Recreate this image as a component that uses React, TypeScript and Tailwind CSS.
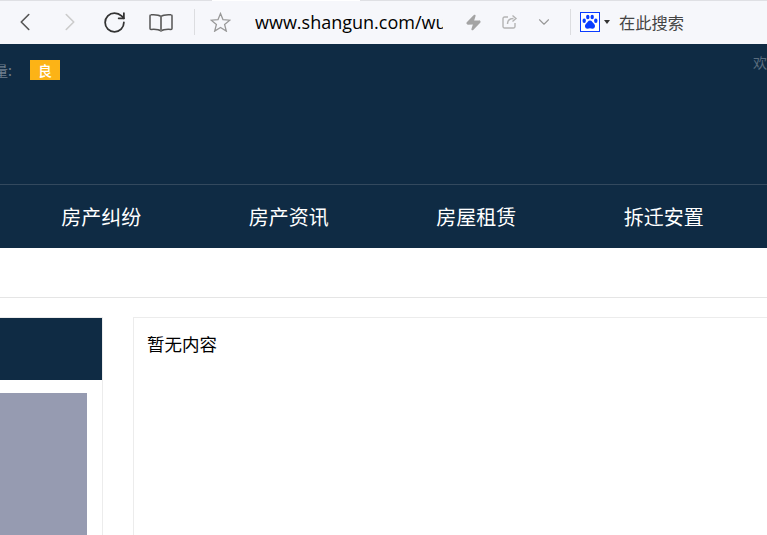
import { ChevronDown, ChevronLeft, ChevronRight, RotateCw, Zap } from "lucide-react";

const navItems = ["房产纠纷", "房产资讯", "房屋租赁", "拆迁安置"];
const cjk = "font-['Noto_Sans_CJK_SC',sans-serif]";

function BookIcon() {
  return (
    <svg width="24" height="20" viewBox="0 0 24 20" fill="none" stroke="#555" strokeWidth="1.5">
      <path d="M12 3.500C10 1.800 6 1.500 2 1.800c-.6 0-1 .4-1 1v12.600c0 .6.4 1 1 1 4-.3 8 0 10 1.600 2-1.600 6-1.900 10-1.600.6 0 1-.4 1-1V2.800c0-.6-.4-1-1-1-4-.3-8 0-10 1.700z" />
      <path d="M12 3.500V18" strokeWidth="2" stroke="#777" />
    </svg>
  );
}

function StarIcon() {
  return (
    <svg width="21" height="20" viewBox="0 0 21 20" fill="none" stroke="#999" strokeWidth="1.300">
      <path d="M10.500 1.500 13 7.700l6.800.5-5.200 4.300 1.700 6.600-5.800-3.600-5.800 3.600 1.700-6.600L1.200 8.200 8 7.700z" />
    </svg>
  );
}

function ShareIcon() {
  return (
    <svg width="16" height="16" viewBox="0 0 16 16" fill="none" stroke="#b4b4b4" strokeWidth="1.4">
      <path d="M6 3H2.500A1.500 1.500 0 0 0 1 4.500v8A1.500 1.500 0 0 0 2.500 14h9a1.500 1.500 0 0 0 1.500-1.500V9" />
      <path d="M5.500 10c0-3.500 2.500-5.500 6-5.500M10.500 1.500 14 4.500l-3.500 3" />
    </svg>
  );
}

function PawLogo() {
  return (
    <div className="flex h-[20px] w-[20px] items-center justify-center border-[1.500px] border-[#0a3cff] bg-white">
      <svg width="16" height="16" viewBox="0 0 16 16" fill="#0a3cff">
        <ellipse cx="2.200" cy="6.800" rx="1.700" ry="2.200" />
        <ellipse cx="5.800" cy="3" rx="1.700" ry="2.200" />
        <ellipse cx="10.200" cy="3" rx="1.700" ry="2.200" />
        <ellipse cx="13.800" cy="6.800" rx="1.700" ry="2.200" />
        <path d="M8 6.500c-2 0-2.500 2-4 3.200-1.800 1.500-1.200 5 1.500 5 1 0 1.700-.4 2.500-.4s1.500.4 2.500.4c2.700 0 3.300-3.500 1.500-5C10.500 8.500 10 6.500 8 6.500z" />
      </svg>
    </div>
  );
}

function Toolbar() {
  return (
    <div className="relative flex h-[44px] items-center bg-[#f6f7fb]">
      <div className="absolute left-0 right-0 top-0 flex h-px">
        <div className="w-[212px] bg-[#dfe0e4]" />
        <div className="w-[148px] bg-white" />
        <div className="flex-1 bg-[#dfe0e4]" />
      </div>
      <ChevronLeft size={30} strokeWidth={1.300} color="#555" className="ml-[10px]" />
      <ChevronRight size={30} strokeWidth={1.300} color="#ccc" className="ml-[15px]" />
      <RotateCw size={25} strokeWidth={1.700} color="#333" className="ml-[17px]" />
      <div className="ml-[22px] mt-[1px]">
        <BookIcon />
      </div>
      <div className="ml-[21px] h-[26px] w-px bg-[#dcdde0]" />
      <div className="ml-[15px]">
        <StarIcon />
      </div>
      <div className="ml-[24px] mt-[1px] w-[188px] overflow-hidden whitespace-nowrap font-['Open_Sans',sans-serif] text-[18px] text-black">
        www.shangun.com/wu
      </div>
      <Zap size={17} fill="#a4a4a4" color="#a4a4a4" className="ml-[22px]" />
      <div className="ml-[20px]">
        <ShareIcon />
      </div>
      <ChevronDown size={18} strokeWidth={1.500} color="#999" className="ml-[17px]" />
      <div className="ml-[17px] h-[26px] w-px bg-[#dcdde0]" />
      <div className="ml-[9px]">
        <PawLogo />
      </div>
      <div className="ml-[4px] h-0 w-0 border-x-[3.500px] border-t-[4px] border-x-transparent border-t-[#333]" />
      <span className={`ml-[9px] mt-[1px] text-[16.250px] text-[#444] ${cjk}`}>在此搜索</span>
    </div>
  );
}

function Header() {
  return (
    <header className={`h-[204px] overflow-hidden bg-[#0f2b44] ${cjk}`}>
      <div className="flex h-[140px] items-start justify-between pt-[8px]">
        <div className="mt-[8px] flex items-center">
          <span className="ml-[-6px] w-[36px] text-[14px] leading-[20px] text-[#6f7f8e]">量:</span>
          <span className="flex h-[20px] w-[30px] items-center justify-center bg-[#fcb316] text-[14px] font-medium text-white">
            良
          </span>
        </div>
        <span className="text-[14px] leading-[20px] text-[#5a6d7f]">欢</span>
      </div>
      <nav className="grid h-[64px] grid-cols-[repeat(4,187.500px)] border-t border-[#33495e] pl-[7.500px]">
        {navItems.map((item) => (
          <a key={item} className="flex items-center justify-center text-[20px] text-white">
            {item}
          </a>
        ))}
      </nav>
    </header>
  );
}

export default function App() {
  return (
    <div className="h-[535px] w-[767px] overflow-hidden bg-white">
      <Toolbar />
      <Header />
      <div className="h-[50px] border-b border-[#e5e5e5]" />
      <main className="flex items-start pt-[19px]">
        <aside className="h-[300px] w-[103px] border-t border-r border-[#ececec]">
          <div className="h-[62px] bg-[#0f2b44]" />
          <div className="mt-[13px] h-[200px] w-[87px] bg-[#969bb1]" />
        </aside>
        <section
          className={`ml-[30px] h-[300px] flex-1 border border-r-0 border-[#ececec] px-[13px] py-[13px] text-[17.500px] leading-[26px] text-black ${cjk}`}
        >
          暂无内容
        </section>
      </main>
    </div>
  );
}
